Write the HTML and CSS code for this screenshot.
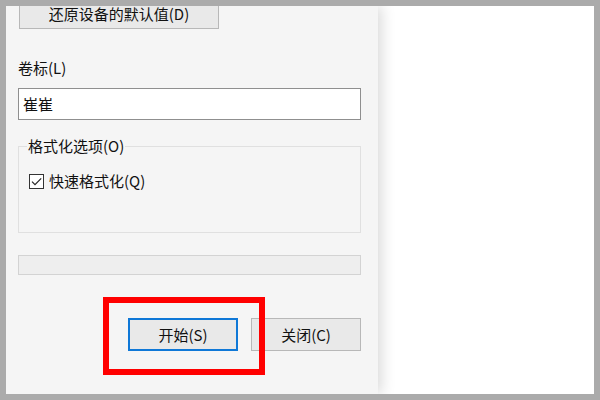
FILE: index.html
```html
<!DOCTYPE html>
<html lang="zh-CN">
<head>
<meta charset="utf-8">
<link rel="stylesheet" href="styles.css">
</head>
<body>
<div class="screen">
  <div class="dialog">
    <button class="btn btn-top">还原设备的默认值(D)</button>
    <div class="label">卷标(L)</div>
    <div class="input">崔崔</div>
    <fieldset class="group">
      <legend>格式化选项(O)</legend>
      <div class="group-body">
        <div class="check-row">
          <span class="checkbox">
            <svg width="15" height="15" viewBox="0 0 15 15"><path d="M3 7.6 L6 10.6 L12.2 4.3" fill="none" stroke="#262626" stroke-width="1.2"/></svg>
          </span>
          <span>快速格式化(Q)</span>
        </div>
      </div>
    </fieldset>
    <div class="progress"></div>
    <div class="actions">
      <button class="btn btn-primary">开始(S)</button>
      <button class="btn">关闭(C)</button>
    </div>
  </div>
  <div class="highlight"></div>
</div>
</body>
</html>
```
FILE: styles.css
```css
html, body {
  margin: 0;
  padding: 0;
}
body {
  background: #ababab;
  width: 600px;
  height: 400px;
  font-family: "Noto Sans CJK SC", "Noto Sans", sans-serif;
  font-size: 15px;
  color: #111;
}
.screen {
  position: relative;
  margin: 6px;
  width: 588px;
  height: 388px;
  background: #ffffff;
  overflow: hidden;
  display: flex;
}
.dialog {
  width: 372px;
  height: 388px;
  background: #f5f5f5;
  box-sizing: border-box;
  padding: 0 17px 0 12px;
  display: flex;
  flex-direction: column;
  overflow: hidden;
  box-shadow: 3px 0 14px rgba(0, 0, 0, 0.16);
}
.btn {
  font-family: inherit;
  font-size: 15px;
  line-height: 20px;
  color: #111;
  background: #e9e9e9;
  border: 1px solid #b8b8b8;
  padding: 0;
  width: 110px;
  height: 33px;
  box-sizing: border-box;
}
.btn-top {
  width: 200px;
  height: 23px;
  margin: 0 0 0 1px;
  border-top: none;
  line-height: 16px;
  padding-bottom: 6px;
}
.label {
  margin-top: 29px;
  line-height: 20px;
  height: 20px;
}
.input {
  margin-top: 10px;
  height: 32px;
  box-sizing: border-box;
  border: 1px solid #8f8f8f;
  background: #fff;
  padding: 0 4px;
  line-height: 30px;
}
.group {
  margin: 16px 0 0 0;
  padding: 0 8px;
  border: 1px solid #e0e0e0;
  min-width: 0;
}
.group legend {
  padding: 0 1px;
  margin-left: 0;
  line-height: 20px;
  height: 20px;
}
.group-body {
  height: 76px;
  box-sizing: border-box;
  padding-top: 15px;
}
.check-row {
  display: flex;
  align-items: center;
  gap: 5px;
  height: 20px;
  line-height: 20px;
  padding-left: 2px;
}
.checkbox {
  width: 15px;
  height: 15px;
  box-sizing: border-box;
  border: 1px solid #333;
  background: #fff;
  display: flex;
}
.checkbox svg {
  margin: -1px;
}
.progress {
  margin-top: 22px;
  height: 20px;
  box-sizing: border-box;
  border: 1px solid #d3d3d3;
  background: #eeeeee;
}
.actions {
  margin-top: 43px;
  display: flex;
  justify-content: flex-end;
  gap: 13px;
}
.btn-primary {
  border: 2px solid #0f78d7;
}
.highlight {
  position: absolute;
  left: 97px;
  top: 291px;
  width: 162px;
  height: 78px;
  box-sizing: border-box;
  border: 6px solid #ff0000;
}
```
